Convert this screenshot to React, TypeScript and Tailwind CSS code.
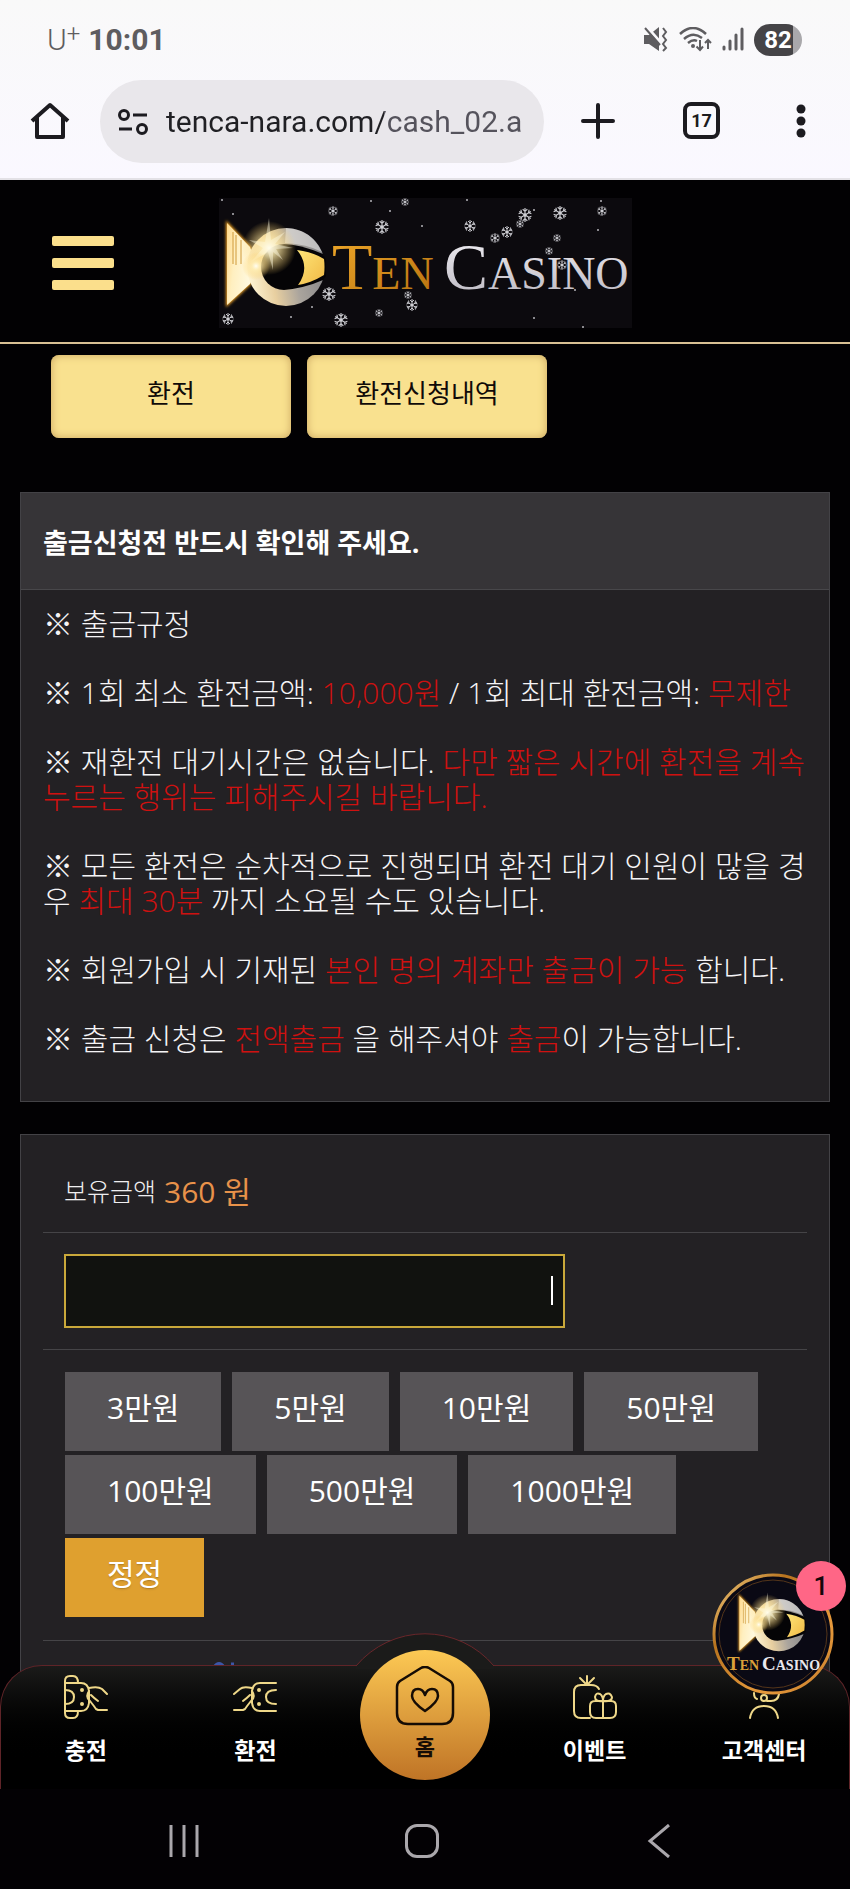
import type { ReactNode } from "react";

const fontStack = "font-['Open_Sans','Noto_Sans_CJK_KR',sans-serif]";

const amounts = ["3만원", "5만원", "10만원", "50만원", "100만원", "500만원", "1000만원"];

// x, y, radius
const flakes = [
  [114, 13, 5], [163, 29, 7], [186, 4, 4], [251, 28, 6], [306, 17, 7], [288, 34, 6],
  [276, 40, 5], [301, 26, 4], [341, 15, 7], [383, 13, 5], [338, 40, 4], [330, 53, 4],
  [343, 67, 5], [110, 96, 7], [193, 107, 6], [189, 97, 4], [160, 115, 4], [122, 122, 7], [9, 121, 6],
];

const dots = [
  [14, 16], [152, 3], [171, 13], [203, 28], [248, 2], [315, 12], [379, 32], [382, 3],
  [93, 109], [72, 119], [356, 92], [315, 120], [364, 129], [3, 2],
];

function LogoMark({ id }: { id: string }) {
  return (
    <g>
      <defs>
        <linearGradient id={`${id}-tail`} x1="0" y1="0" x2="1" y2="0.3">
          <stop offset="0" stopColor="#ffd98a" />
          <stop offset="0.35" stopColor="#ffefc0" />
          <stop offset="1" stopColor="#fffbe6" />
        </linearGradient>
        <linearGradient id={`${id}-ring`} x1="0" y1="0.6" x2="1" y2="0.4">
          <stop offset="0" stopColor="#fff6d6" />
          <stop offset="0.3" stopColor="#e8cfa0" />
          <stop offset="0.6" stopColor="#aaa49d" />
          <stop offset="1" stopColor="#858588" />
        </linearGradient>
        <linearGradient id={`${id}-eye`} x1="0" y1="0" x2="1" y2="1">
          <stop offset="0" stopColor="#ffe678" />
          <stop offset="1" stopColor="#f0b845" />
        </linearGradient>
        <radialGradient id={`${id}-glow`}>
          <stop offset="0" stopColor="#fffdf2" />
          <stop offset="0.3" stopColor="#ffedb0" stopOpacity="0.8" />
          <stop offset="1" stopColor="#ffcf60" stopOpacity="0" />
        </radialGradient>
        <filter id={`${id}-blur`} x="-50%" y="-50%" width="200%" height="200%">
          <feGaussianBlur stdDeviation="1.500" />
        </filter>
      </defs>
      <path d="M8 25L31 49L38 68L31 86L8 107Z" fill="#f5a623" stroke="#f5a623" strokeWidth="2" filter={`url(#${id}-blur)`} />
      <path d="M8 25L31 49L38 68L31 86L8 107Z" fill={`url(#${id}-tail)`} />
      <path d="M14 34V66M17 37V67M22 42V66" stroke="#cf9a3a" fill="none" />
      <circle cx="67" cy="69" r="39" fill={`url(#${id}-ring)`} />
      <path d="M67 30A39 39 0 0 1 103 54Q88 46 66 45Z" fill="#fff" opacity="0.45" />
      <path d="M65 46Q80 46 104 56L107 62V78L104 82Q86 90 65 92A23 23 0 0 1 65 46Z" fill="#050406" />
      <path d="M78 52Q94 54 105 61Q106 69 105 77Q92 85 79 87Q92 69 78 52Z" fill={`url(#${id}-eye)`} />
      <circle cx="50" cy="50" r="27" fill={`url(#${id}-glow)`} />
      <path d="M50 20L52 42L66 34L56 46L74 50L57 51L64 62L54 54L54 72L49 54L32 64L44 50L30 42L46 44Z" fill="#fffbe0" opacity="0.45" />
      <circle cx="37" cy="68" r="14" fill={`url(#${id}-glow)`} />
    </g>
  );
}

function Logo() {
  return (
    <svg viewBox="0 0 413 130" className="w-[413px]" role="img" aria-label="Ten Casino">
      <defs>
        <linearGradient id="gold" x1="0" y1="0" x2="1" y2="1">
          <stop offset="0" stopColor="#f0a92a" />
          <stop offset="1" stopColor="#b5700f" />
        </linearGradient>
        <linearGradient id="silver" x1="0" y1="0" x2="0" y2="1">
          <stop offset="0" stopColor="#f4f2f6" />
          <stop offset="1" stopColor="#b9b6bf" />
        </linearGradient>
      </defs>
      <rect width="413" height="130" fill="#0c0a0e" />
      <LogoMark id="head" />
      <g fontFamily="'Liberation Serif', serif">
        <text x="113" y="91" fontSize="66" fill="url(#gold)">
          T<tspan fontSize="46">EN</tspan>
        </text>
        <text x="225" y="91" fontSize="66" fill="url(#silver)">
          C<tspan fontSize="46">ASINO</tspan>
        </text>
      </g>
      {flakes.map(([x, y, r]) => (
        <g key={`${x}-${y}`} transform={`translate(${x} ${y}) scale(${r / 6})`} stroke="#c9c9ce" fill="none">
          <path strokeWidth="1" d="M0-6V6M-5-3L5 3M-5 3L5-3M-2-5L0-3L2-5M-2 5L0 3L2 5M-5.500-1L-3-2L-3.500-4.500M5.500 1L3 2L3.500 4.500M-5.500 1L-3 2L-3.500 4.500M5.500-1L3-2L3.500-4.500" />
          <circle r="1.500" fill="#cfcfd4" stroke="none" />
        </g>
      ))}
      {dots.map(([x, y]) => (
        <circle key={`${x}-${y}`} cx={x} cy={y} r="1" fill="#b5b5ba" />
      ))}
    </svg>
  );
}

function StatusBar() {
  return (
    <div className="flex h-20 items-center justify-between pr-12 pl-[47px] text-[#5e5d60]">
      <div className="flex items-center gap-2 font-['Roboto',sans-serif]">
        <span className="text-[30px] leading-9 font-light">
          U<sup className="-top-2 text-2xl">+</sup>
        </span>
        <span className="text-[30px] leading-9 font-bold">10:01</span>
      </div>
      <div className="flex items-center gap-2.5">
        <svg width="26" height="26" viewBox="0 0 26 26" fill="none" stroke="#5e5d60" strokeWidth="2">
          <path d="M1 8H6L16 0V24L6 17H1Z" fill="#5e5d60" stroke="none" />
          <path d="M4 0L18 16" stroke="#faf9fc" strokeWidth="3" />
          <path d="M2 1L17 18" />
          <path d="M20 1L23 5L20 9L23 13L20 17L23 21L20 24" />
        </svg>
        <svg width="33" height="26" viewBox="0 0 33 26" fill="none" stroke="#5e5d60" strokeWidth="2.500">
          <path d="M1 7Q14-5 27 7M5 12Q14 4 23 11M9 16Q14 12 18 14" />
          <circle cx="14" cy="19" r="2" fill="#5e5d60" stroke="none" />
          <path d="M21 13V23M17.500 19.500L21 23L24 19.500M29 22V13M26 16L29 13L32 16" strokeWidth="2" />
        </svg>
        <svg width="22" height="26" viewBox="0 0 22 26" fill="none" stroke="#5e5d60" strokeWidth="3" strokeLinecap="round">
          <path d="M2 20V22M8 14V22M14 8V22M20 2V22" />
        </svg>
        <div className="flex h-8 w-12 items-center justify-center rounded-full bg-linear-to-r from-[#454447] from-82% to-[#a9a8ab] to-82% font-['Roboto',sans-serif] text-2xl font-bold text-white">
          82
        </div>
      </div>
    </div>
  );
}

function BrowserBar() {
  return (
    <div className="flex h-[98px] items-start pr-[44px] pl-[30px] text-[#1c1b20]">
      <button aria-label="Home" className="mt-[21px] mr-[30px] shrink-0">
        <svg width="40" height="40" viewBox="0 0 40 40" fill="none" stroke="currentColor" strokeWidth="4">
          <path d="M2 20L20 4L38 20M7 16V36H33V16" strokeLinejoin="round" />
        </svg>
      </button>
      <div className="flex h-[83px] min-w-0 flex-1 items-center rounded-full bg-[#e9e7eb] pr-4 pl-[17px]">
        <svg width="32" height="28" viewBox="0 0 32 28" fill="none" stroke="currentColor" strokeWidth="3" className="mr-[17px] shrink-0">
          <circle cx="7" cy="7" r="4.500" />
          <path d="M16 7H30M2 21H15" />
          <circle cx="25" cy="21" r="4.500" />
        </svg>
        <input
          aria-label="Address"
          defaultValue="tenca-nara.com/cash_02.a"
          className="w-full min-w-0 bg-[linear-gradient(90deg,#202024_218px,#55535c_218px)] bg-clip-text font-['Roboto',sans-serif] text-[30px] leading-10 text-transparent outline-none"
        />
      </div>
      <button aria-label="New tab" className="mt-[22px] ml-[36px] shrink-0">
        <svg width="36" height="38" viewBox="0 0 36 38" stroke="currentColor" strokeWidth="4" strokeLinecap="round">
          <path d="M18 3V35M3 19H33" />
        </svg>
      </button>
      <button
        aria-label="Tabs"
        className="mt-[22px] ml-[67px] flex size-[37px] shrink-0 items-center justify-center rounded-lg border-4 border-[#1c1b20] font-['Roboto',sans-serif] text-lg font-bold"
      >
        17
      </button>
      <button aria-label="Menu" className="mt-[22px] ml-[76px] shrink-0">
        <svg width="10" height="38" viewBox="0 0 10 38" fill="currentColor">
          <circle cx="5" cy="7" r="4.500" />
          <circle cx="5" cy="19" r="4.500" />
          <circle cx="5" cy="31" r="4.500" />
        </svg>
      </button>
    </div>
  );
}

function Red({ children }: { children: ReactNode }) {
  return <span className="text-[#cf1110]">{children}</span>;
}

function Notice() {
  return (
    <section className="mx-5 border border-[#434246] bg-[#232124]">
      <h2 className="border-b border-[#48474a] bg-[#363437] px-[22px] pt-[31px] pb-[27px] text-[27px] leading-[38px] font-bold text-white">
        출금신청전 반드시 확인해 주세요.
      </h2>
      <div className="flex flex-col gap-[34px] pt-4 pr-3 pb-[45px] pl-[22px] text-[30px] leading-[35px] font-light break-all text-[#f5f4f6]">
        <p>※ 출금규정</p>
        <p>
          ※ 1회 최소 환전금액: <Red>10,000원</Red> / 1회 최대 환전금액: <Red>무제한</Red>
        </p>
        <p>
          ※ 재환전 대기시간은 없습니다. <Red>다만 짧은 시간에 환전을 계속 누르는 행위는 피해주시길 바랍니다.</Red>
        </p>
        <p>
          ※ 모든 환전은 순차적으로 진행되며 환전 대기 인원이 많을 경우 <Red>최대 30분</Red> 까지 소요될 수도 있습니다.
        </p>
        <p>
          ※ 회원가입 시 기재된 <Red>본인 명의 계좌만 출금이 가능</Red> 합니다.
        </p>
        <p>
          ※ 출금 신청은 <Red>전액출금</Red> 을 해주셔야 <Red>출금</Red>이 가능합니다.
        </p>
      </div>
    </section>
  );
}

function WithdrawForm() {
  return (
    <form className="mx-5 mt-8 flex-1 border border-[#434246] bg-[#232124] px-[22px] text-[30px]">
      <div className="flex h-[98px] items-center border-b border-[#454447] px-[21px] pt-4">
        <label htmlFor="amount" className="text-[25px] font-light text-[#efeef0]">
          보유금액
        </label>
        <span className="ml-2 text-[#e8924a]">360 원</span>
      </div>
      <div className="border-b border-[#454447] px-[21px] py-[21px]">
        <div className="relative w-[501px] max-w-full">
          <input
            id="amount"
            type="text"
            inputMode="numeric"
            className="block h-[74px] w-full border-2 border-[#c9a83a] bg-[#11120f] px-3 text-right text-white outline-none"
          />
          <span className="absolute top-[22px] right-3 h-[29px] w-0.5 bg-white" />
        </div>
      </div>
      <div className="flex flex-wrap gap-x-[11px] gap-y-1 border-b border-[#454447] pt-[22px] pr-8 pb-[23px] pl-[22px] text-white">
        {amounts.map((amount) => (
          <button key={amount} type="button" className="h-[79px] bg-[#575457] px-[42px] pb-2">
            {amount}
          </button>
        ))}
        <div className="basis-full">
          <button type="reset" className="h-[79px] bg-[#dfa02f] px-[42px] pb-2 text-shadow-sm">
            정정
          </button>
        </div>
      </div>
      <svg width="24" height="8" viewBox="0 0 24 8" fill="none" stroke="#3c56a8" strokeWidth="3" className="mt-5 ml-[170px]">
        <path d="M1 6Q6-1 11 6M18 3H21" />
      </svg>
    </form>
  );
}

function NavIcon({ children }: { children: ReactNode }) {
  return (
    <svg
      width="44"
      height="44"
      viewBox="0 0 44 44"
      fill="none"
      stroke="#efd889"
      strokeWidth="2"
      strokeLinecap="round"
      strokeLinejoin="round"
    >
      {children}
    </svg>
  );
}

function NavItem({ label, children }: { label: string; children: ReactNode }) {
  return (
    <a href="#" className="flex flex-1 flex-col items-center gap-[15px] pt-[9px] text-[23px] leading-8 font-bold text-white">
      {children}
      {label}
    </a>
  );
}

function BottomNav() {
  return (
    <nav className="absolute inset-x-0 bottom-0 flex h-[124px] rounded-t-[42px] border-x border-t border-[#5f2428] bg-linear-to-b from-[#1b1b1a] to-black to-80%">
      <NavItem label="충전">
        <NavIcon>
          <path d="M1 8V6Q1 1 6 1H9Q14 1 14 8M1 36V38Q1 43 6 43H9Q14 43 14 36M1 8V36M1 8H17Q24 8 25 16V28Q24 36 17 36H1" />
          <path d="M1 15Q10 15 10 22T1 29" />
          <path d="M25 13Q34 11 38 14L43 19M25 16Q21 22 26 26Q30 31 32 34L34 35H43M27 20Q30 23 34 26" />
          <circle cx="18" cy="15" r="1" fill="#efd889" />
          <circle cx="18" cy="29" r="1" fill="#efd889" />
        </NavIcon>
      </NavItem>
      <NavItem label="환전">
        <NavIcon>
          <path d="M43 8H27Q20 8 19 16V28Q20 36 27 36H43M43 15Q33 15 33 22T43 29" />
          <path d="M19 13Q10 11 7 14L1 19M19 16Q23 22 18 26Q14 31 12 34L10 35H1M17 20Q14 23 10 26" />
          <circle cx="26" cy="15" r="1" fill="#efd889" />
          <circle cx="26" cy="29" r="1" fill="#efd889" />
        </NavIcon>
      </NavItem>
      <div className="relative flex flex-1 justify-center">
        <svg width="140" height="36" viewBox="0 0 140 36" className="absolute -top-[33px]">
          <path d="M1 33A90 90 0 0 1 139 33V36H1Z" fill="#1b1b1a" />
          <path d="M1 33A90 90 0 0 1 139 33" fill="none" stroke="#6a262a" />
        </svg>
        <a
          href="#"
          className="absolute -top-4 flex size-[130px] flex-col items-center rounded-full bg-linear-to-b from-[#fcc954] to-[#bf7426] pt-4 text-[22px] leading-10 font-bold text-[#150c05]"
        >
          <svg width="60" height="60" viewBox="0 0 60 60" fill="none" stroke="#150c05" strokeWidth="2.500" strokeLinejoin="round">
            <path d="M2 21Q2 17 5 15L26 2Q30 0 34 2L55 15Q58 17 58 21V47Q58 58 47 58H13Q2 58 2 47Z" />
            <path d="M30 45Q17 36 17 30Q17 23 23 23Q28 23 30 29Q32 23 37 23Q43 23 43 30Q43 36 30 45Z" />
          </svg>
          홈
        </a>
      </div>
      <NavItem label="이벤트">
        <NavIcon>
          <path d="M14 1V9M7 3L13 9M21 3L15 9M17 43H8Q1 43 1 36V17Q1 10 8 10H18Q24 10 26 14" />
          <path d="M17 31Q17 26 22 26H38Q43 26 43 31V37Q43 43 37 43H23Q17 43 17 37ZM30 26V43M30 26Q22 27 22 22Q23 17 27 19Q30 21 30 26Q30 21 33 19Q37 17 39 22Q39 27 30 26" />
        </NavIcon>
      </NavItem>
      <NavItem label="고객센터">
        <NavIcon>
          <path d="M8 43Q10 31 22 31T36 43M12 18Q12 23 15 24M37 19Q36 26 29 26H25" />
          <circle cx="22" cy="23" r="3" />
        </NavIcon>
      </NavItem>
      <a href="#" aria-label="Chat" className="absolute -top-[93px] right-[15px]">
        <svg width="122" height="122" viewBox="0 0 122 122">
          <defs>
            <linearGradient id="rim" x1="0" y1="0" x2="1" y2="1">
              <stop offset="0" stopColor="#f6d48a" />
              <stop offset="0.3" stopColor="#b8741f" />
              <stop offset="0.7" stopColor="#e79a3c" />
              <stop offset="1" stopColor="#c27a2a" />
            </linearGradient>
          </defs>
          <circle cx="61" cy="61" r="59" fill="#0a0914" stroke="url(#rim)" strokeWidth="3" />
          <circle cx="61" cy="61" r="54" fill="none" stroke="#54351a" />
          <g transform="translate(22 6) scale(0.67)">
            <LogoMark id="chat" />
          </g>
          <g fontFamily="'Liberation Serif', serif" fontWeight="bold" fontSize="19">
            <text x="15" y="97" fill="#dba13a">
              T<tspan fontSize="14">EN</tspan>
            </text>
            <text x="50" y="97" fill="#e9e8ee">
              C<tspan fontSize="14">ASINO</tspan>
            </text>
          </g>
        </svg>
        <span className="absolute -top-3 -right-3 flex size-[50px] items-center justify-center rounded-full bg-[#ff6686] font-['Roboto',sans-serif] text-[26px] font-medium text-[#16060a]">
          1
        </span>
      </a>
    </nav>
  );
}

function SystemBar() {
  return (
    <div className="flex h-[100px] shrink-0 items-center bg-[#030104] pt-1 pr-[72px] pl-[65px] text-[#aaa7ac]">
      <button aria-label="Recents" className="flex flex-1 justify-center">
        <svg width="32" height="34" viewBox="0 0 32 34" stroke="currentColor" strokeWidth="3">
          <path d="M3 1V33M16 1V33M29 1V33" />
        </svg>
      </button>
      <button aria-label="Home screen" className="flex flex-1 justify-center">
        <span className="size-[34px] rounded-xl border-3 border-[#aaa7ac]" />
      </button>
      <button aria-label="Back" className="flex flex-1 justify-center">
        <svg width="24" height="34" viewBox="0 0 24 34" fill="none" stroke="currentColor" strokeWidth="3">
          <path d="M22 1L3 17L22 33" />
        </svg>
      </button>
    </div>
  );
}

export default function App() {
  return (
    <div className={`flex h-screen flex-col overflow-hidden bg-black ${fontStack}`}>
      <div className="shrink-0 border-b-2 border-[#e3e1e6] bg-linear-to-b from-[#f9f9f9] to-[#faf8ff]">
        <StatusBar />
        <BrowserBar />
      </div>

      <div className="relative flex min-h-0 flex-1 flex-col overflow-hidden bg-[#020103]">
        <header className="relative flex h-[164px] shrink-0 items-center justify-center border-b-2 border-[#d8c094] pt-1">
          <button aria-label="Menu" className="absolute left-[52px] flex w-[62px] flex-col gap-3">
            <span className="h-2.5 rounded-xs bg-[#fbdf8c]" />
            <span className="h-2.5 rounded-xs bg-[#fbdf8c]" />
            <span className="h-2.5 rounded-xs bg-[#fbdf8c]" />
          </button>
          <Logo />
        </header>

        <div className="mt-[11px] mb-[54px] flex gap-4 px-[51px] text-[26px] text-[#100a08]">
          <a href="#" className="flex h-[83px] w-60 items-center justify-center rounded-lg bg-[#f9e18f] pb-1.5 shadow-[inset_0_0_8px_#c9a560]">
            환전
          </a>
          <a href="#" className="flex h-[83px] w-60 items-center justify-center rounded-lg bg-[#f9e18f] pb-1.5 shadow-[inset_0_0_8px_#c9a560]">
            환전신청내역
          </a>
        </div>

        <Notice />
        <WithdrawForm />
        <BottomNav />
      </div>

      <SystemBar />
    </div>
  );
}
